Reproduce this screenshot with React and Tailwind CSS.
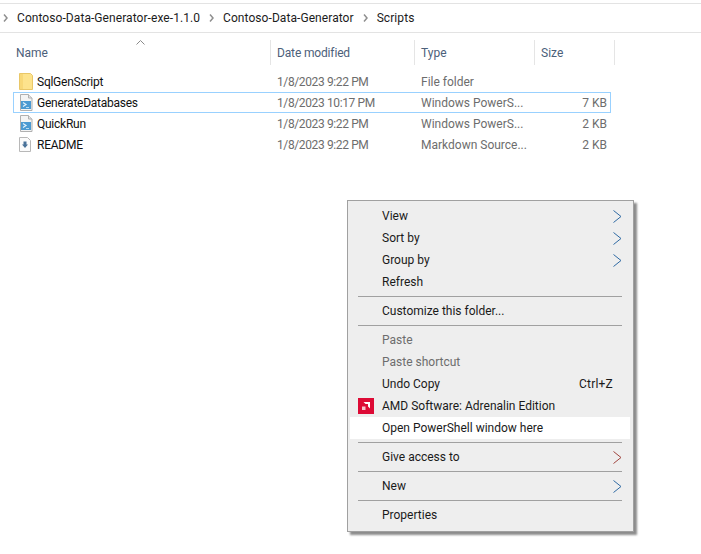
const font = "font-['Roboto','Noto_Sans',sans-serif]"

const FolderIcon = () => (
  <svg width="14" height="17" viewBox="0 0 14 17">
    <path d="M.5.500h11l2 2v14h-13z" fill="#fde38d" stroke="#e9c768" />
    <path d="M1 1h3v15h-3z" fill="#f8d878" />
  </svg>
)

const PsIcon = () => (
  <svg width="14" height="17" viewBox="0 0 14 17">
    <path d="M1.500.5h8l3.500 3.500v12.500h-11.500z" fill="#f4f4f4" stroke="#b0b0b0" />
    <path d="M9.500.5v3.500h3.500" fill="#e2e2e2" stroke="#b0b0b0" />
    <rect x="2" y="7" width="10" height="8" fill="#4c9ad2" />
    <path d="M4 8.500l3 2-3 2" fill="none" stroke="#e4f2fb" strokeWidth="1.200" />
    <path d="M7 13.500h3" stroke="#b5daf1" />
  </svg>
)

const MdIcon = () => (
  <svg width="12" height="15" viewBox="0 0 12 15">
    <path d="M.5.500h8l3 3v11h-11z" fill="#fbfbfb" stroke="#b8b8b8" />
    <path d="M4.500 4.500h3v3h1.500l-3 3.500-3-3.500h1.500z" fill="#4a7299" />
  </svg>
)

const files = [
  { name: "SqlGenScript", date: "1/8/2023 9:22 PM", type: "File folder", size: "", icon: <FolderIcon /> },
  { name: "GenerateDatabases", date: "1/8/2023 10:17 PM", type: "Windows PowerS...", size: "7 KB", icon: <PsIcon />, selected: true },
  { name: "QuickRun", date: "1/8/2023 9:22 PM", type: "Windows PowerS...", size: "2 KB", icon: <PsIcon /> },
  { name: "README", date: "1/8/2023 9:22 PM", type: "Markdown Source...", size: "2 KB", icon: <MdIcon /> },
]

const Crumb = ({ first }) => (
  <svg width="5" height="8" viewBox="0 0 5 8" className={first ? "ml-[3px] mr-[9px]" : "mx-[9px]"}>
    <path d="M1 .5l3 3.500-3 3.500" fill="none" stroke="#8f8f8f" strokeWidth="1.500" />
  </svg>
)

const Arrow = ({ red }) => (
  <svg width="9" height="13" viewBox="0 0 9 13" className="ml-auto">
    <path d="M.5.500l7.500 6-7.500 6" fill="none" stroke={red ? "#a0453f" : "#2f6aa3"} strokeWidth="1" />
  </svg>
)

const Sep = () => (
  <div className="h-[7px] flex items-center px-2">
    <div className="h-px w-full bg-[#a0a0a0]" />
  </div>
)

const MenuItem = ({ label, arrow, disabled, hot, shortcut, icon, red }) => (
  <div className={`h-[22px] flex items-center relative pl-[32px] pr-2 ${hot ? "bg-white" : ""} ${disabled ? "text-[#6d6d6d]" : "text-[#1a1a1a]"}`}>
    {icon && <div className="absolute left-2 top-[3px]">{icon}</div>}
    <span>{label}</span>
    {shortcut && <span className="ml-auto mr-[9px] tracking-[0.2px]">{shortcut}</span>}
    {arrow && <Arrow red={red} />}
  </div>
)

const AmdIcon = () => (
  <svg width="16" height="16" viewBox="0 0 16 16">
    <rect width="16" height="16" fill="#dd0a35" />
    <path d="M5.500 4h6.500v6.500l-2-2v-2.500h-2.500z" fill="#fff" />
    <path d="M4 8.500h3.500v3.500h-3.500z" fill="#f5c4ce" />
  </svg>
)

const App = () => {
  return (
    <div className={`relative w-[701px] h-[554px] overflow-hidden bg-white text-[12px] ${font}`}>
      <div className="mt-[3px] h-[30px] border-y border-[#e3e3e3] flex items-center text-[#1c1c1c] tracking-[0.07px]">
        <Crumb first />
        <span>Contoso-Data-Generator-exe-1.1.0</span>
        <Crumb />
        <span>Contoso-Data-Generator</span>
        <Crumb />
        <span>Scripts</span>
      </div>

      <div className="relative mt-[7px] h-[25px] flex text-[#4c607a] pl-[13px]">
        <div className="w-[258px] border-r border-[#e5e5e5] pl-[3px] flex items-center">Name</div>
        <svg width="9" height="5" viewBox="0 0 9 5" className="absolute left-[136px] top-[0px]">
          <path d="M.5 4.500l4-4 4 4" fill="none" stroke="#8a8a8a" />
        </svg>
        <div className="w-[144px] border-r border-[#e5e5e5] pl-[6px] flex items-center tracking-[-0.15px]">Date modified</div>
        <div className="w-[120px] border-r border-[#e5e5e5] pl-[6px] flex items-center">Type</div>
        <div className="w-[80px] border-r border-[#e5e5e5] pl-[6px] flex items-center">Size</div>
      </div>

      <div className="mt-[6px] pl-[13px]">
        {files.map((f) => (
          <div key={f.name} className={`h-[21px] w-[598px] flex items-center ${f.selected ? "border border-[#99d1ff]" : "border border-transparent"}`}>
            <div className="w-[256px] flex items-center pl-[5px] text-[#111]">
              <div className="w-[18px] flex justify-start">{f.icon}</div>
              <span className="tracking-[-0.25px]">{f.name}</span>
            </div>
            <div className="w-[144px] pl-[7px] text-[#6d6d6d] tracking-[-0.38px]">{f.date}</div>
            <div className="w-[120px] pl-[7px] text-[#6d6d6d]">{f.type}</div>
            <div className="w-[73px] text-right text-[#6d6d6d]">{f.size}</div>
          </div>
        ))}
      </div>

      <div className="absolute left-[347px] top-[200px] w-[287px] h-[332px] bg-[#eeeeee] border border-[#a0a0a0] pt-[4px] pl-[2px] pr-[3px] shadow-[3px_3px_2px_rgba(0,0,0,0.45)]">
        <MenuItem label="View" arrow />
        <MenuItem label="Sort by" arrow />
        <MenuItem label="Group by" arrow />
        <MenuItem label="Refresh" />
        <Sep />
        <MenuItem label="Customize this folder..." />
        <Sep />
        <MenuItem label="Paste" disabled />
        <MenuItem label="Paste shortcut" disabled />
        <MenuItem label="Undo Copy" shortcut="Ctrl+Z" />
        <MenuItem label="AMD Software: Adrenalin Edition" icon={<AmdIcon />} />
        <MenuItem label="Open PowerShell window here" hot />
        <Sep />
        <MenuItem label="Give access to" arrow red />
        <Sep />
        <MenuItem label="New" arrow />
        <Sep />
        <MenuItem label="Properties" />
      </div>
    </div>
  )
}

export default App
